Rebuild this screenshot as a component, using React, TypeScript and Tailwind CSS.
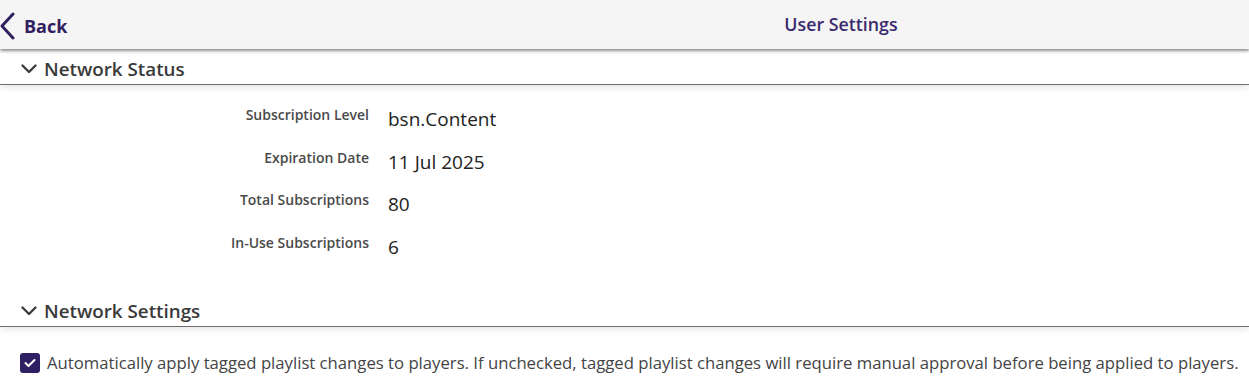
import React from "react";

const font = { fontFamily: '"Open Sans", "Noto Sans", sans-serif' };

function Chevron() {
  return (
    <svg width="16" height="10" viewBox="0 0 16 10" className="shrink-0">
      <path d="M1.5 1.5 L8 8 L14.5 1.5" fill="none" stroke="#3a3a3a" strokeWidth="2.3" strokeLinecap="round" strokeLinejoin="round" />
    </svg>
  );
}

function SectionHeader({ title }: { title: string }) {
  return (
    <div className="h-[36px] flex items-center pt-[5px] pl-[21px] gap-[7px] border-b border-[#6e6e6e] bg-white shadow-[0_3px_6px_rgba(0,0,0,0.09)] relative">
      <Chevron />
      <span className="text-[18.8px] font-semibold text-[#3a3a3a] leading-none">{title}</span>
    </div>
  );
}

const rows: [string, string][] = [
  ["Subscription Level", "bsn.Content"],
  ["Expiration Date", "11 Jul 2025"],
  ["Total Subscriptions", "80"],
  ["In-Use Subscriptions", "6"],
];

export default function App() {
  return (
    <div className="w-[1249px] h-[387px] bg-white overflow-hidden" style={font}>
      <div className="h-[49px] bg-[#f5f5f5] flex items-center shadow-[0_2px_3px_rgba(0,0,0,0.45)] relative z-10">
        <div className="w-[433px] flex items-center h-full">
          <svg width="16" height="28" viewBox="0 0 16 28" className="mt-[3px]">
            <path d="M13 2 L2 14 L13 26" fill="none" stroke="#32205f" strokeWidth="3" strokeLinecap="round" strokeLinejoin="round" />
          </svg>
          <span className="ml-[8px] text-[18px] font-bold text-[#32205f] mt-[3px]">Back</span>
        </div>
        <div className="flex-1 text-center text-[17.8px] font-semibold text-[#3b2a6e]">User Settings</div>
      </div>
      <SectionHeader title="Network Status" />
      <div className="pt-[20px] pb-[16px] flex flex-col shadow-[0_2px_3px_rgba(0,0,0,0.04)]">
        {rows.map(([l, v]) => (
          <div key={l} className="flex items-start h-[42.5px]">
            <div className="w-[369px] text-right text-[14px] leading-[20px] font-semibold text-[#4a4a4a]">{l}</div>
            <div className="ml-[19px] text-[19px] leading-[28px] text-[#222]">{v}</div>
          </div>
        ))}
      </div>
      <SectionHeader title="Network Settings" />
      <div className="flex items-center pl-[20px] pt-[23px]">
        <div className="w-[20px] h-[20px] rounded-[3px] bg-[#2e1f62] flex items-center justify-center">
          <svg width="12" height="10" viewBox="0 0 12 10">
            <path d="M1.5 5 L4.5 8 L10.5 2" fill="none" stroke="white" strokeWidth="2" strokeLinecap="round" strokeLinejoin="round" />
          </svg>
        </div>
        <span className="ml-[7px] text-[16.7px] text-[#444] whitespace-nowrap">
          Automatically apply tagged playlist changes to players. If unchecked, tagged playlist changes will require manual approval before being applied to players.
        </span>
      </div>
    </div>
  );
}
